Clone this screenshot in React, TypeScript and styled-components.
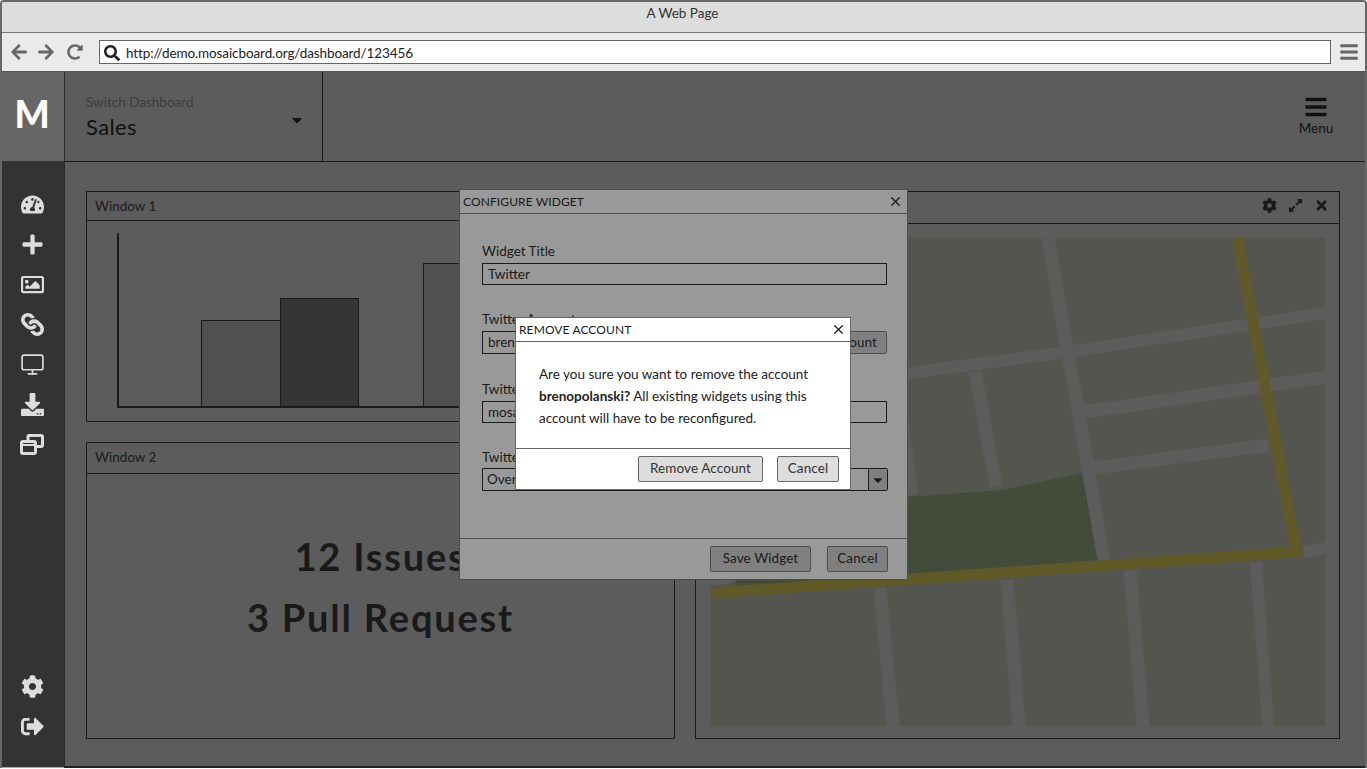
import styled, { createGlobalStyle } from "styled-components";
import { FaArrowLeft, FaArrowRight, FaBars, FaCaretDown, FaCog, FaDownload, FaExpandAlt, FaLink, FaPlus, FaRedoAlt, FaRegImage, FaSearch, FaSignOutAlt, FaTachometerAlt, FaTimes } from "react-icons/fa";
import { Monitor, X } from "lucide-react";

const GlobalStyle = createGlobalStyle`
  html, body { margin: 0; padding: 0; background: #fff; }
  body { font-family: "Lato", "Liberation Sans", sans-serif; font-size: 13.5px; color: #1a1a1a; }
  * { box-sizing: border-box; }
`;

const Frame = styled.div`
  position: relative;
  width: 1367px;
  height: 768px;
  overflow: hidden;
  display: flex;
  flex-direction: column;
  border: 2px solid #666;
  border-bottom: none;
  border-radius: 4px 4px 0 0;
`;
const TitleBar = styled.div`
  height: 31px;
  flex: none;
  background: #ddd;
  border-bottom: 1px solid #777;
  display: flex;
  align-items: center;
  justify-content: center;
  padding: 0 2px 8px 0;
  color: #333;
`;
const NavBar = styled.div`
  height: 39px;
  flex: none;
  background: #eaeaea;
  border-bottom: 1px solid #555;
  display: flex;
  align-items: center;
  padding-left: 8px;
  color: #666;
  svg { flex: none; }
`;
const NavButtons = styled.div`
  width: 89px;
  flex: none;
  display: flex;
  align-items: center;
  gap: 9px;
  font-size: 18px;
  svg:last-child { font-size: 16px; margin-left: 3px; }
`;
const UrlBox = styled.div`
  width: 1232px;
  height: 24px;
  flex: none;
  background: #fff;
  border: 1px solid #666;
  display: flex;
  align-items: center;
  gap: 6px;
  padding: 1px 4px 0;
  color: #222;
  letter-spacing: -0.1px;
`;
const NavMenu = styled.div`
  margin-left: 8px;
  font-size: 20px;
  display: flex;
`;
const Body = styled.div`
  flex: 1;
  min-height: 0;
  display: grid;
  grid-template-columns: 62px 1fr;
`;
const Sidebar = styled.aside`
  background: #333;
  display: flex;
  flex-direction: column;
  border-bottom: 1px solid #aaa;
`;
const LogoCell = styled.div`
  height: 89px;
  flex: none;
  background: #666;
  display: flex;
  align-items: center;
  justify-content: center;
  color: #fff;
  font-weight: 900;
  font-size: 37px;
  padding: 0 2px 6px 0;
`;
const SideNav = styled.nav`
  flex: 1;
  display: flex;
  flex-direction: column;
  padding: 23px 2px 21px 0;
`;
const SideIcon = styled.div<{ $flip?: boolean }>`
  height: 40px;
  display: flex;
  align-items: center;
  justify-content: center;
  color: #ddd;
  font-size: 23px;
  svg { transform: ${(props) => (props.$flip ? "rotate(90deg)" : "none")}; }
`;
const Spacer = styled.div`
  flex: 1;
`;
const Main = styled.main`
  min-width: 0;
  display: flex;
  flex-direction: column;
  background: #5c5c5c;
  border-left: 1px solid #2a2a2a;
  border-bottom: 2px solid #222;
`;
const Header = styled.header`
  height: 90px;
  flex: none;
  display: flex;
  justify-content: space-between;
  border-bottom: 1px solid #1a1a1a;
`;
const Switcher = styled.div`
  width: 258px;
  position: relative;
  padding: 21px 0 0 21px;
  border-right: 1px solid #1a1a1a;
  display: flex;
  flex-direction: column;
  gap: 2px;
`;
const SwitchLabel = styled.div`
  line-height: 18px;
  color: #3d3d3d;
`;
const SwitchValue = styled.div`
  font-size: 22px;
  line-height: 27px;
  letter-spacing: 0.4px;
  color: #111;
`;
const SwitchCaret = styled.div`
  position: absolute;
  right: 17px;
  top: 40px;
  font-size: 16px;
  color: #111;
  display: flex;
`;
const MenuButton = styled.div`
  width: 60px;
  margin-right: 19px;
  padding-top: 23px;
  display: flex;
  flex-direction: column;
  align-items: center;
  color: #111;
  line-height: 18px;
  svg { font-size: 24px; }
`;
const Content = styled.div`
  flex: 1;
  min-height: 0;
  display: grid;
  grid-template-columns: 589px 645px;
  gap: 20px;
  padding: 29px 0 27px 21px;
`;
const LeftColumn = styled.div`
  display: grid;
  grid-template-rows: 231px 297px;
  gap: 20px;
`;
const Window = styled.section`
  border: 1px solid #1a1a1a;
  display: flex;
  flex-direction: column;
  min-height: 0;
`;
const WindowTitle = styled.div<{ $height: number }>`
  height: ${(props) => props.$height}px;
  flex: none;
  display: flex;
  align-items: center;
  justify-content: space-between;
  padding: 0 10px ${(props) => props.$height - 28}px 8px;
  border-bottom: 1px solid #1a1a1a;
  color: #1a1a1a;
`;
const WindowTools = styled.div`
  display: flex;
  align-items: center;
  gap: 11px;
  font-size: 15px;
`;
const ChartBody = styled.div`
  flex: 1;
  padding: 12px 0 0 30px;
  svg { display: block; }
`;
const IssuesBody = styled.div`
  flex: 1;
  display: flex;
  flex-direction: column;
  align-items: center;
  padding-top: 52px;
  font-size: 38px;
  font-weight: 700;
  letter-spacing: 1.8px;
  line-height: 61px;
  color: #1a1a1a;
`;
const MapBody = styled.div`
  flex: 1;
  padding: 14px 14px 12px 15px;
  svg { display: block; }
`;
const Dialog = styled.div<{ $left: number; $top: number; $width: number; $height: number; $light?: boolean }>`
  position: absolute;
  left: ${(props) => props.$left}px;
  top: ${(props) => props.$top}px;
  width: ${(props) => props.$width}px;
  height: ${(props) => props.$height}px;
  display: flex;
  flex-direction: column;
  background: ${(props) => (props.$light ? "#fff" : "#999")};
  border: 1px solid ${(props) => (props.$light ? "#666" : "#4d4d4d")};
`;
const DialogTitle = styled.div<{ $light?: boolean }>`
  height: 24px;
  flex: none;
  display: flex;
  align-items: center;
  justify-content: space-between;
  padding: 0 4px 0 3px;
  border-bottom: 1px solid ${(props) => (props.$light ? "#666" : "#4d4d4d")};
  font-size: 12px;
  letter-spacing: 0.1px;
  color: #1a1a1a;
  svg { flex: none; }
`;
const FormBody = styled.div`
  flex: 1;
  display: flex;
  flex-direction: column;
  gap: 24.4px;
  padding: 27px 20px 0 22px;
`;
const Field = styled.div`
  display: flex;
  flex-direction: column;
`;
const FieldLabel = styled.div`
  height: 22px;
  line-height: 21px;
  color: #1a1a1a;
`;
const FieldRow = styled.div`
  display: flex;
`;
const TextBox = styled.div`
  flex: 1;
  height: 23px;
  border: 1px solid #1a1a1a;
  padding: 0 5px;
  line-height: 20px;
  color: #1a1a1a;
`;
const AddButton = styled.div`
  width: 110px;
  height: 23px;
  flex: none;
  border: 1px solid #4d4d4d;
  border-radius: 2px;
  background: #808080;
  line-height: 21px;
  text-align: right;
  padding-right: 9px;
  letter-spacing: 0.1px;
`;
const SelectBox = styled.div`
  flex: 1;
  height: 23px;
  margin: -1px -1px 0 0;
  border: 1px solid #1a1a1a;
  border-radius: 0 2px 2px 0;
  display: flex;
  justify-content: space-between;
  line-height: 20px;
  padding-left: 4px;
`;
const SelectArrow = styled.div`
  width: 19px;
  background: #808080;
  border-left: 1px solid #1a1a1a;
  display: flex;
  align-items: center;
  justify-content: center;
  font-size: 14px;
`;
const DialogFooter = styled.div<{ $light?: boolean; $height: number; $gap: number; $right: number }>`
  height: ${(props) => props.$height}px;
  flex: none;
  display: flex;
  justify-content: flex-end;
  align-items: flex-start;
  gap: ${(props) => props.$gap}px;
  padding: 7px ${(props) => props.$right}px 0 0;
  border-top: 1px solid ${(props) => (props.$light ? "#666" : "#4d4d4d")};
`;
const Button = styled.div<{ $width: number; $light?: boolean }>`
  width: ${(props) => props.$width}px;
  height: 26px;
  border: 1px solid ${(props) => (props.$light ? "#666" : "#4d4d4d")};
  border-radius: 2px;
  background: ${(props) => (props.$light ? "#ddd" : "#808080")};
  color: ${(props) => (props.$light ? "#333" : "#1a1a1a")};
  line-height: 23px;
  text-align: center;
  letter-spacing: 0.1px;
`;
const Message = styled.div`
  flex: 1;
  padding: 21px 10px 0 23px;
  line-height: 22px;
  color: #222;
  b { font-weight: 700; }
`;

function CloneIcon() {
  return (
    <svg width="24" height="21" viewBox="0 0 24 21" fill="none" stroke="#ddd" strokeWidth="3">
      <path d="M8 6V2.500Q8 1.500 9 1.500H21Q22.500 1.500 22.500 3V11Q22.500 12.500 21 12.500H16" />
      <rect x="1.500" y="7.500" width="14" height="12" rx="1.500" />
      <path d="M2 11H15" strokeWidth="2" />
    </svg>
  );
}

function BarChart() {
  return (
    <svg width="480" height="176" viewBox="0 0 480 176">
      <rect x="84.500" y="87.500" width="79" height="87" fill="#505050" stroke="#1a1a1a" />
      <rect x="163.500" y="65.500" width="78" height="109" fill="#353535" stroke="#1a1a1a" />
      <rect x="306.500" y="30.500" width="79" height="144" fill="#505050" stroke="#1a1a1a" />
      <path d="M1 0V174H480" fill="none" stroke="#1a1a1a" strokeWidth="2" />
    </svg>
  );
}

const roads: [string, number][] = [
  ["1048,238 1067,348 1079,415 1098,525 1104,560", 13],
  ["711,415 908,373 1067,352 1326,313", 12],
  ["1084,412 1326,377", 13],
  ["1094,468 1269,445", 13],
  ["975,372 996,486", 13],
  ["900,400 912,495", 12],
  ["711,580 735,576", 12],
  ["880,588 893,726", 13],
  ["1007,580 1019,726", 13],
  ["1130,570 1143,726", 13],
  ["1256,562 1268,726", 12],
  ["1303,552 1325,548", 12],
];

function MapView() {
  // map coordinates are page pixels, so the viewBox starts at the picture's corner
  return (
    <svg width="614" height="488" viewBox="711 238 614 488">
      <rect x="711" y="238" width="614" height="488" fill="#555550" />
      <polygon points="733,590 760,510 908,497 1003,490 1082,473 1098,560" fill="#434c3a" />
      {roads.map(([points, width]) => (
        <polyline key={points} points={points} fill="none" stroke="#5c5c5c" strokeWidth={width} />
      ))}
      <polyline points="1237,238 1275,440 1296,552 712,593" fill="none" stroke="#5f5a28" strokeWidth="11" />
    </svg>
  );
}

function App() {
  return (
    <>
      <GlobalStyle />
      <Frame>
        <TitleBar>A Web Page</TitleBar>
        <NavBar>
          <NavButtons>
            <FaArrowLeft />
            <FaArrowRight />
            <FaRedoAlt />
          </NavButtons>
          <UrlBox>
            <FaSearch size={16} />
            http://demo.mosaicboard.org/dashboard/123456
          </UrlBox>
          <NavMenu>
            <FaBars />
          </NavMenu>
        </NavBar>
        <Body>
          <Sidebar>
            <LogoCell>M</LogoCell>
            <SideNav>
              <SideIcon><FaTachometerAlt /></SideIcon>
              <SideIcon><FaPlus /></SideIcon>
              <SideIcon><FaRegImage /></SideIcon>
              <SideIcon $flip><FaLink /></SideIcon>
              <SideIcon><Monitor size={25} strokeWidth={1.6} /></SideIcon>
              <SideIcon><FaDownload /></SideIcon>
              <SideIcon><CloneIcon /></SideIcon>
              <Spacer />
              <SideIcon><FaCog /></SideIcon>
              <SideIcon><FaSignOutAlt /></SideIcon>
            </SideNav>
          </Sidebar>
          <Main>
            <Header>
              <Switcher>
                <SwitchLabel>Switch Dashboard</SwitchLabel>
                <SwitchValue>Sales</SwitchValue>
                <SwitchCaret><FaCaretDown /></SwitchCaret>
              </Switcher>
              <MenuButton>
                <FaBars />
                Menu
              </MenuButton>
            </Header>
            <Content>
              <LeftColumn>
                <Window>
                  <WindowTitle $height={29}>Window 1</WindowTitle>
                  <ChartBody><BarChart /></ChartBody>
                </Window>
                <Window>
                  <WindowTitle $height={31}>Window 2</WindowTitle>
                  <IssuesBody>
                    <div>12 Issues</div>
                    <div>3 Pull Request</div>
                  </IssuesBody>
                </Window>
              </LeftColumn>
              <Window>
                <WindowTitle $height={32}>
                  Window 3
                  <WindowTools>
                    <FaCog />
                    <FaExpandAlt />
                    <FaTimes />
                  </WindowTools>
                </WindowTitle>
                <MapBody><MapView /></MapBody>
              </Window>
            </Content>
          </Main>
        </Body>
        <Dialog $left={457} $top={187} $width={449} $height={391}>
          <DialogTitle>
            CONFIGURE WIDGET
            <X size={15} />
          </DialogTitle>
          <FormBody>
            <Field>
              <FieldLabel>Widget Title</FieldLabel>
              <TextBox>Twitter</TextBox>
            </Field>
            <Field>
              <FieldLabel>Twitter Account</FieldLabel>
              <FieldRow>
                <TextBox>brenopolanski</TextBox>
                <AddButton>Add Account</AddButton>
              </FieldRow>
            </Field>
            <Field>
              <FieldLabel>Twitter Search</FieldLabel>
              <TextBox>mosaicboard</TextBox>
            </Field>
            <Field>
              <FieldLabel>Twitter View</FieldLabel>
              <FieldRow>
                <SelectBox>
                  Overview
                  <SelectArrow><FaCaretDown /></SelectArrow>
                </SelectBox>
              </FieldRow>
            </Field>
          </FormBody>
          <DialogFooter $height={41} $gap={16} $right={19}>
            <Button $width={101}>Save Widget</Button>
            <Button $width={61}>Cancel</Button>
          </DialogFooter>
        </Dialog>
        <Dialog $left={513} $top={315} $width={336} $height={173} $light>
          <DialogTitle $light>
            REMOVE ACCOUNT
            <X size={15} />
          </DialogTitle>
          <Message>
            Are you sure you want to remove the account <b>brenopolanski?</b> All existing widgets using this account will have to be reconfigured.
          </Message>
          <DialogFooter $light $height={41} $gap={14} $right={11}>
            <Button $width={125} $light>Remove Account</Button>
            <Button $width={62} $light>Cancel</Button>
          </DialogFooter>
        </Dialog>
      </Frame>
    </>
  );
}

export default App;
